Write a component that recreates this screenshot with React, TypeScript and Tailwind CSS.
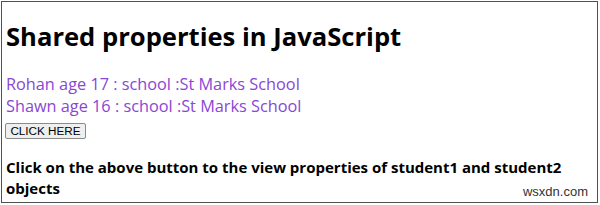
export default function App() {
  const students = [
    { name: "Rohan", age: 17 },
    { name: "Shawn", age: 16 },
  ];

  return (
    <div className="relative h-[205px] w-[600px] bg-white">
      <div className="absolute inset-x-[1px] top-[1px] h-[202px] w-[597px] border border-[#505050]" />
      <div className="relative px-[6px] pt-[19px] font-['Open_Sans','Noto_Sans',sans-serif]">
        <h1 className="text-[25.6px] font-bold leading-[36px] text-black">Shared properties in JavaScript</h1>
        <div className="mt-[18px] text-[16.3px] font-medium leading-[22px] text-[#8a46d6]">
          {students.map((s) => (
            <div key={s.name}>
              {s.name} age {s.age} : school :St Marks School
            </div>
          ))}
        </div>
        <button
          type="button"
          className="ml-[-1px] mt-[1px] h-[16px] w-[81px] rounded-[2px] border border-[#8a8a8a] bg-[#efefef] font-['Liberation_Sans',sans-serif] text-[11.7px] leading-[14px] text-black"
        >
          CLICK HERE
        </button>
        <p className="mt-[16px] text-[15px] font-bold leading-[21px] text-black">
          Click on the above button to the view properties of student1 and student2 objects
        </p>
      </div>
      <span className="absolute bottom-[7px] right-[12px] font-['Liberation_Sans',sans-serif] text-[13px] leading-none text-[#333]">
        wsxdn.com
      </span>
    </div>
  );
}
